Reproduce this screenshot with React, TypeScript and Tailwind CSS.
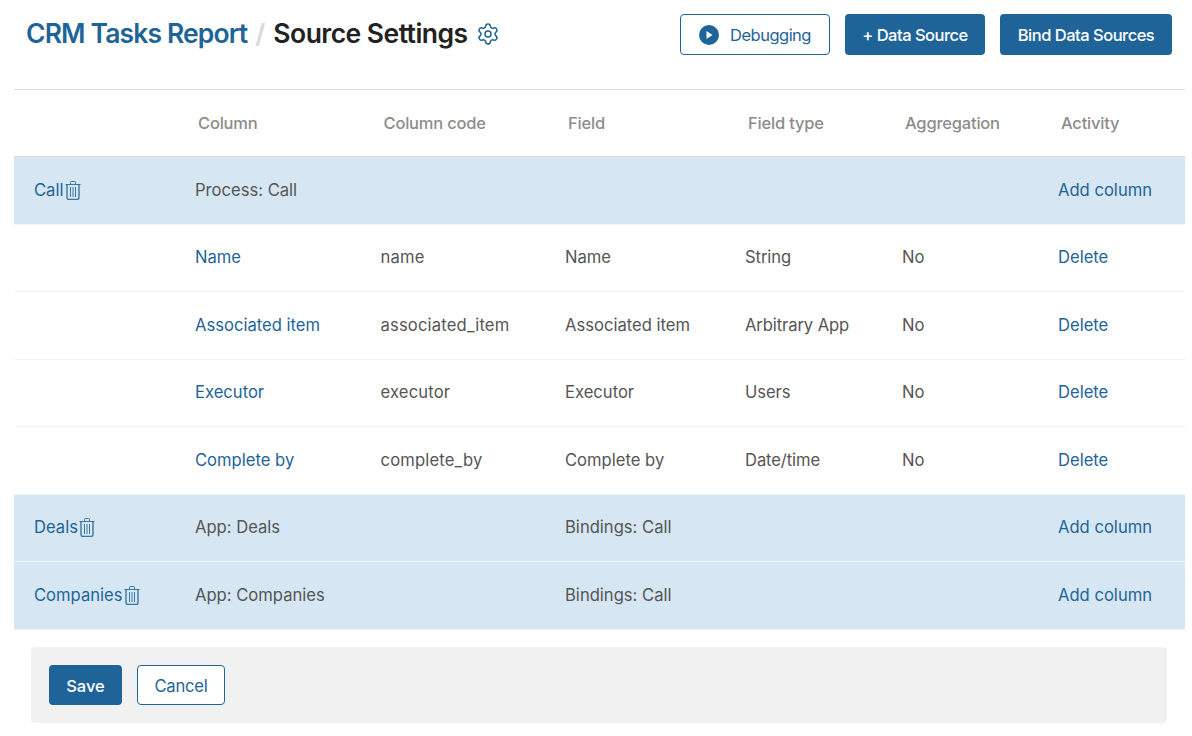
import { Settings } from "lucide-react";

const gridCols = "grid grid-cols-[167px_185.5px_184.5px_180px_157px_156px_1fr]";

const TrashIcon = () => (
  <svg width="16" height="19" viewBox="0 0 16 19" fill="none" stroke="#1f6498" strokeOpacity="0.85" strokeWidth="1" className="shrink-0 ml-[1.5px]">
    <path d="M0.5 3.5h15" />
    <path d="M5.5 3.5v-2a1 1 0 0 1 1-1h3a1 1 0 0 1 1 1v2" />
    <path d="M2 3.5v13a2 2 0 0 0 2 2h8a2 2 0 0 0 2-2v-13" strokeWidth="1.4" />
    <path d="M5.5 6v10M8 6v10M10.5 6v10" />
  </svg>
);

const PlayIcon = () => (
  <svg width="20" height="20" viewBox="0 0 20 20" className="shrink-0">
    <circle cx="10" cy="10" r="10" fill="#1f6498" />
    <path d="M7.5 6l6 4-6 4z" fill="#fff" />
  </svg>
);

type SourceRow = { name: string; type: string; field?: string };
type ColumnRow = { name: string; code: string; field: string; fieldType: string };

const SourceLine = ({ name, type, field }: SourceRow) => (
  <div className={`${gridCols} h-[67.5px] items-center bg-[#d6e7f3] border-b border-white/60 text-[#555]`}>
    <div className="pl-5 flex items-center text-[#1f6498]">
      <span>{name}</span>
      <TrashIcon />
    </div>
    <div className="pl-[14px]">{type}</div>
    <div />
    <div className="pl-[14px]">{field}</div>
    <div />
    <div />
    <div className="pl-[14px] text-[#1f6498]">Add column</div>
  </div>
);

const ColumnLine = ({ name, code, field, fieldType }: ColumnRow) => (
  <div className={`${gridCols} h-[67.5px] items-center border-b border-[#f3f3f3] text-[#555]`}>
    <div />
    <div className="pl-[14px] text-[#1f6498]">{name}</div>
    <div className="pl-[14px] tracking-[0.17px]">{code}</div>
    <div className="pl-[14px]">{field}</div>
    <div className="pl-[14px] tracking-[-0.1px]">{fieldType}</div>
    <div className="pl-[14px]">No</div>
    <div className="pl-[14px] text-[#1f6498]">Delete</div>
  </div>
);

const columns: ColumnRow[] = [
  { name: "Name", code: "name", field: "Name", fieldType: "String" },
  { name: "Associated item", code: "associated_item", field: "Associated item", fieldType: "Arbitrary App" },
  { name: "Executor", code: "executor", field: "Executor", fieldType: "Users" },
  { name: "Complete by", code: "complete_by", field: "Complete by", fieldType: "Date/time" },
];

const headers = ["Column", "Column code", "Field", "Field type", "Aggregation", "Activity"];

export default function App() {
  return (
    <div className="w-[1192px] h-[736px] bg-white overflow-hidden font-['Inter',sans-serif] text-[16.6px]">
      {/* Header */}
      <div className="h-[89px] flex items-start justify-between pl-[26px] pr-5 pt-[14px]">
        <div className="flex items-center h-10 text-[26.5px] font-semibold">
          <span className="text-[#1f6498] tracking-[-0.87px]">CRM Tasks Report</span>
          <span className="text-[#d9d9d9] ml-2 mr-2">/</span>
          <span className="text-[#222] tracking-[-0.55px]">Source Settings</span>
          <Settings className="ml-2 text-[#1f6498]" size={24} strokeWidth={1.5} />
        </div>
        <div className="flex gap-[15px] tracking-[-0.5px] font-medium text-[16.5px]">
          <button className="w-[150px] h-[41px] flex items-center pl-[18px] gap-[11px] pt-px bg-white border border-[#1f6498] rounded text-[#1f6498]">
            <PlayIcon />
            <span className="font-normal">Debugging</span>
          </button>
          <button className="w-[140px] h-[41px] pt-px bg-[#1f6498] rounded text-white">+ Data Source</button>
          <button className="w-[172px] h-[41px] pt-px bg-[#1f6498] rounded text-white">Bind Data Sources</button>
        </div>
      </div>

      {/* Table */}
      <div className="ml-[14px] w-[1171px]">
        <div className={`${gridCols} h-[68px] items-center border-y border-[#dcdcdc] text-[16.5px] tracking-[-0.2px] font-medium text-[#8c8c8c]`}>
          <div />
          {headers.map((h) => (
            <div key={h} className="pl-[17px]">{h}</div>
          ))}
        </div>
        <SourceLine name="Call" type="Process: Call" />
        {columns.map((c) => (
          <ColumnLine key={c.code} {...c} />
        ))}
        <SourceLine name="Deals" type="App: Deals" field="Bindings: Call" />
        <SourceLine name="Companies" type="App: Companies" field="Bindings: Call" />
      </div>

      {/* Footer */}
      <div className="mt-[17px] ml-[31px] w-[1136px] h-[76px] bg-[#f1f1f1] rounded flex items-center pl-[18px] gap-[15px]">
        <button className="w-[73px] h-10 pt-[3px] bg-[#1f6498] rounded text-white font-medium text-[16.5px]">Save</button>
        <button className="w-[88px] h-10 pt-[3px] bg-white border border-[#1f6498] rounded text-[#1f6498] tracking-[-0.2px]">Cancel</button>
      </div>
    </div>
  );
}
